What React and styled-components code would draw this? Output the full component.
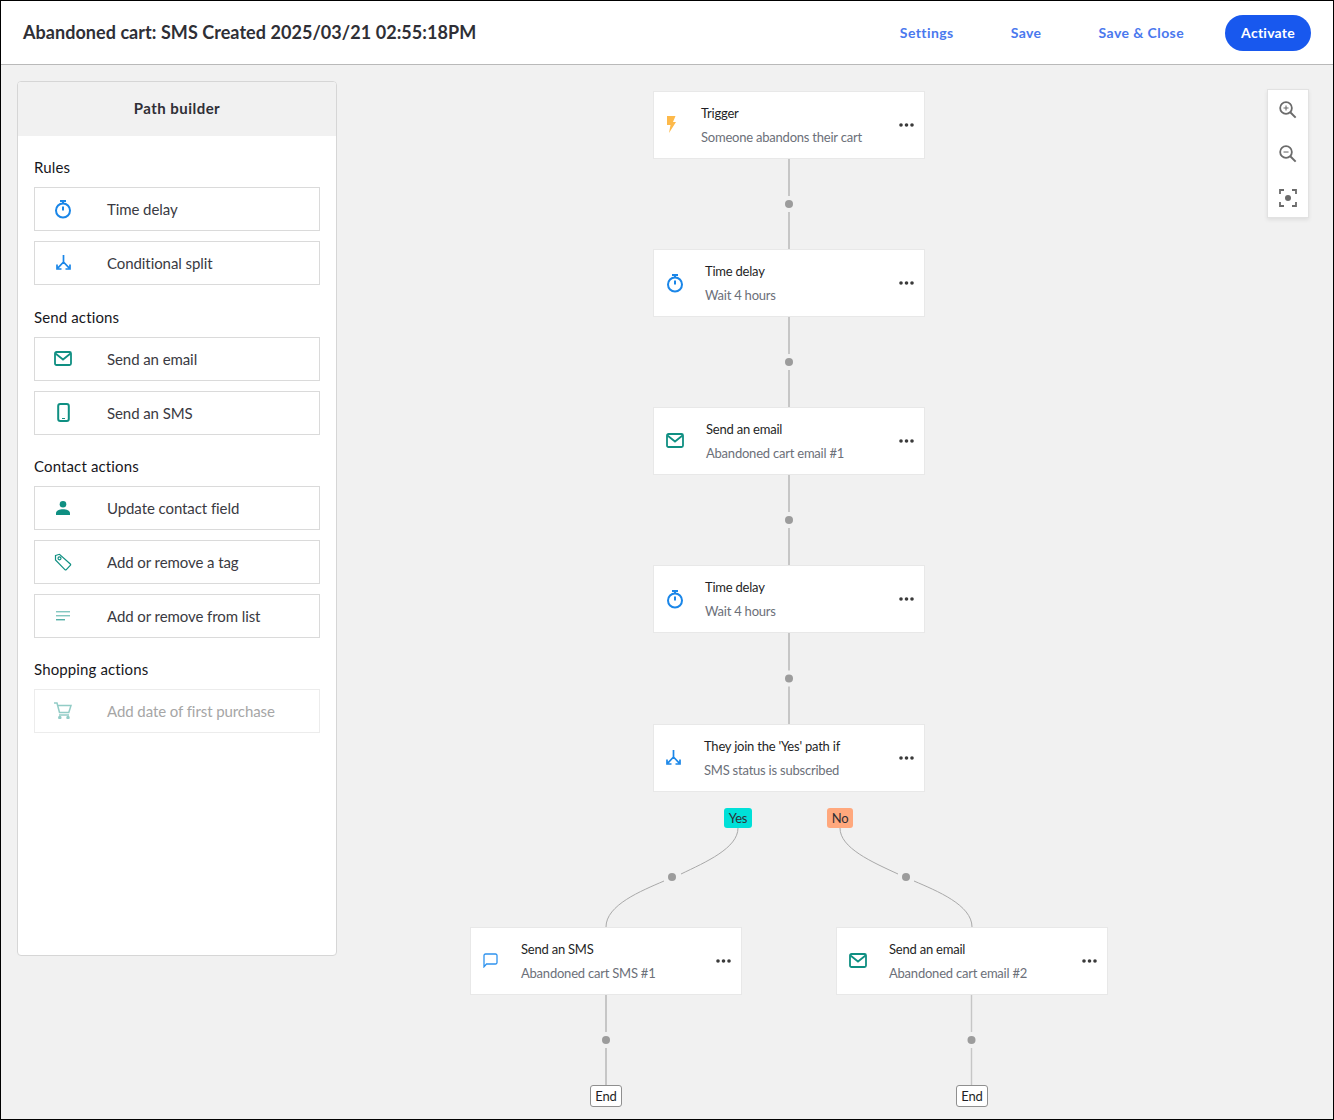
import React from "react";
import styled, { createGlobalStyle } from "styled-components";

const Global = createGlobalStyle`
  * { box-sizing: border-box; }
  html, body { margin: 0; padding: 0; }
  body { font-family: "Lato", "Noto Sans", sans-serif; background: #f1f1f1; }
`;

const Page = styled.div`
  width: 1334px; height: 1120px; border: 1px solid #000; background: #f1f1f1;
  display: flex; flex-direction: column; overflow: hidden;
`;
const Header = styled.header`
  height: 64px; flex: none; background: #fff; border-bottom: 1px solid #b9b9b9;
  display: flex; align-items: center; justify-content: space-between; padding: 0 22px;
`;
const Title = styled.h1`
  margin: 0 0 1px; font-size: 18px; font-weight: 700; color: #2f2f36; letter-spacing: .05px;
`;
const Actions = styled.nav`display: flex; align-items: center; gap: 25px;`;
const LinkButton = styled.button`
  border: 0; background: none; padding: 0 16px; font: 700 14px "Lato", sans-serif;
  color: #4a78ee; letter-spacing: .42px;
`;
const PrimaryButton = styled.button`
  border: 0; background: #1858ee; color: #fff; height: 36px; border-radius: 18px;
  padding: 0 16px; font: 700 14px "Lato", sans-serif; letter-spacing: .25px;
`;
const Body = styled.main`flex: 1; display: flex; position: relative; padding: 16px;`;
const Panel = styled.aside`
  width: 320px; height: 875px; background: #fff; border: 1px solid #d6d6d6; border-radius: 4px;
  overflow: hidden; flex: none;
`;
const PanelTitle = styled.div`
  height: 54px; padding-bottom: 2px; background: #f1f1f1; display: flex; align-items: center; justify-content: center;
  font-size: 15px; font-weight: 700; color: #2f2f36; letter-spacing: .45px;
`;
const PanelBody = styled.div`padding: 22px 16px; display: flex; flex-direction: column; gap: 22px;`;
const Section = styled.section`
  display: flex; flex-direction: column; gap: 10px;
  &:first-child { margin-bottom: 1px; }
`;
const SectionTitle = styled.h2`
  margin: 0 0 -1px; height: 20px; line-height: 18px; font-size: 15px; font-weight: 400; color: #17171c;
  letter-spacing: .13px;
`;
const Row = styled.div`
  height: 44px; border: 1px solid ${p => (p.$disabled ? "#ececec" : "#dadada")}; background: #fff;
  display: flex; align-items: center; padding: 0 0 1px 19px; letter-spacing: -.08px;
  font-size: 15px; color: ${p => (p.$disabled ? "#a6a6a6" : "#3a3a42")};
`;
const RowIcon = styled.span`
  width: 53px; height: 20px; display: flex; align-items: center; opacity: ${p => (p.$disabled ? 0.45 : 1)};
  svg { display: block; }
`;
const RowSlot = styled.span`width: 18px; display: flex; justify-content: center;`;

const Canvas = styled.div`position: absolute; inset: 0;`;
const Wires = styled.svg`position: absolute; left: 0; top: 0;`;
const Node = styled.article`
  position: absolute; left: ${p => p.$x}px; top: ${p => p.$y}px; width: 272px; height: 68px;
  background: #fff; border: 1px solid #e8e8e8; display: flex; align-items: center; padding: 0 0 1px 12px;
`;
const NodeIcon = styled.span`
  width: ${p => p.$w}px; flex: none; display: flex; align-items: center;
  svg { display: block; }
`;
const NodeText = styled.div`flex: 1; display: flex; flex-direction: column; gap: 8px;`;
const NodeTitle = styled.div`font-size: 13px; line-height: 16px; color: #1f1f26; letter-spacing: -.22px;`;
const NodeSub = styled.div`font-size: 13px; line-height: 16px; color: #6c7079; letter-spacing: -.22px;`;
const More = styled.svg`position: absolute; right: 10px; top: 31px;`;
const Badge = styled.div`
  position: absolute; left: ${p => p.$x}px; top: 743px; height: 20px; width: ${p => p.$w}px;
  background: ${p => p.$bg}; border-radius: 3px; color: #2f2f36; font-size: 13px;
  display: flex; align-items: center; justify-content: center; letter-spacing: -.2px;
`;
const EndTag = styled.div`
  position: absolute; left: ${p => p.$x}px; top: 1020px; width: ${p => p.$w}px; height: 22px;
  background: #fff; border: 1px solid #8f8f8f; border-radius: 3px; font-size: 13px; color: #1f1f26;
  display: flex; align-items: center; justify-content: center; letter-spacing: -.2px;
`;
const ZoomBar = styled.div`
  position: absolute; left: 1266px; top: 24px; width: 42px; height: 129px; display: flex;
  flex-direction: column; justify-content: center;
  background: #fff; border: 1px solid #e2e2e2; box-shadow: 0 2px 4px rgba(0,0,0,.08);
`;
const ZoomButton = styled.div`
  height: 44px; flex: none; display: flex; align-items: center; justify-content: center;
  svg { display: block; }
`;

const BLUE = "#1a86e8", TEAL = "#0f8f82";
const Timer = () => (
  <svg width="18" height="20" viewBox="0 0 18 20" fill="none" stroke={BLUE} strokeWidth="2">
    <circle cx="9" cy="11.500" r="7" /><path d="M6 2h6M9 2v2.500M9 11.500V7.500" />
  </svg>
);
const Split = () => (
  <svg width="15" height="15" viewBox="0 0 15 15" fill="none" stroke={BLUE} strokeWidth="1.700">
    <path d="M7.500 0v7L2 12.800M7.500 7L13 12.800M1 9.500v4.500h4.500M14 9.500v4.500h-4.500" />
  </svg>
);
const Mail = () => (
  <svg width="18" height="15" viewBox="0 0 18 15" fill="none" stroke={TEAL} strokeWidth="1.800">
    <rect x="1" y="1" width="16" height="13" rx="1.500" /><path d="M1.500 2.500L9 8.500l7.500-6" />
  </svg>
);
const Phone = () => (
  <svg width="13" height="19" viewBox="0 0 13 19" fill="none" stroke={TEAL} strokeWidth="2">
    <rect x="1.200" y="1" width="10.600" height="17" rx="2" /><path d="M5 15.500h3" strokeWidth="1" />
  </svg>
);
const Person = () => (
  <svg width="14" height="14" viewBox="0 0 14 14" fill={TEAL}>
    <circle cx="7" cy="3.300" r="3.300" /><path d="M0 14v-1.800C0 9.800 3.500 8.300 7 8.300s7 1.500 7 3.900V14z" />
  </svg>
);
const TagIcon = () => (
  <svg width="18" height="18" viewBox="0 0 18 18" fill="none" stroke={TEAL} strokeWidth="1.200">
    <path d="M1.500 2.500l4-1.200 10.800 9.700a1 1 0 0 1 0 1.400l-4 4.200a1 1 0 0 1-1.400 0L1.500 7z" /><circle cx="5.500" cy="5.300" r="1.500" />
  </svg>
);
const ListIcon = () => (
  <svg width="14" height="10" viewBox="0 0 14 10" fill="none" stroke={TEAL}>
    <path d="M0 .8h14" stroke="#4fb0a6" /><path d="M0 4.800h14" stroke="#4fb0a6" /><path d="M0 8.800h9" />
  </svg>
);
const Cart = () => (
  <svg width="18" height="17" viewBox="0 0 18 17" fill="none" stroke={TEAL} strokeWidth="1.500">
    <path d="M0 1h3l2.500 9.500h9.300L17 3.500H4" /><path d="M5 13h10" />
    <circle cx="5.800" cy="15.500" r="1" fill={TEAL} /><circle cx="14" cy="15.500" r="1" fill={TEAL} />
  </svg>
);
const Bolt = () => (
  <svg width="10" height="17" viewBox="0 0 10 17"><path d="M1 0h8.500L7 6h3L3 17l1.500-8H1z" fill="#fdb94a" /></svg>
);
const Chat = () => (
  <svg width="15" height="15" viewBox="0 0 15 15" fill="none" stroke="#2f93ee" strokeWidth="1.300">
    <path d="M1 13.800V2.500A1.500 1.500 0 0 1 2.500 1h10A1.500 1.500 0 0 1 14 2.500v7A1.500 1.500 0 0 1 12.500 11H3.500z" />
  </svg>
);
const ZoomGlass = ({ plus }) => (
  <svg width="18" height="18" viewBox="0 0 20 20" fill="none" stroke="#6b6b6b">
    <circle cx="7.800" cy="7.800" r="6.500" strokeWidth="2" />
    <path d="M12.500 12.500L18.500 18.500" strokeWidth="2.200" />
    <path d={plus ? "M5 7.800h5.600M7.800 5v5.600" : "M5 7.800h5.600"} strokeWidth="1.200" />
  </svg>
);
const Focus = () => (
  <svg width="18" height="18" viewBox="0 0 18 18" fill="none" stroke="#6b6b6b" strokeWidth="1.800">
    <path d="M1 5V1h4M13 1h4v4M17 13v4h-4M5 17H1v-4" /><circle cx="9" cy="9" r="3" fill="#6b6b6b" stroke="none" />
  </svg>
);
const Dots = () => (
  <More width="15" height="4" viewBox="0 0 15 4" fill="#3a3a3a">
    <circle cx="2" cy="2" r="1.800" /><circle cx="7.500" cy="2" r="1.800" /><circle cx="13" cy="2" r="1.800" />
  </More>
);

const sections = [
  ["Rules", [[<Timer />, "Time delay"], [<Split />, "Conditional split"]]],
  ["Send actions", [[<Mail />, "Send an email"], [<Phone />, "Send an SMS"]]],
  ["Contact actions", [[<Person />, "Update contact field"], [<TagIcon />, "Add or remove a tag"], [<ListIcon />, "Add or remove from list"]]],
  ["Shopping actions", [[<Cart />, "Add date of first purchase", true]]],
];

const nodes = [
  { x: 652, y: 26, w: 35, icon: <Bolt />, t: "Trigger", s: "Someone abandons their cart" },
  { x: 652, y: 184, w: 39, icon: <Timer />, t: "Time delay", s: "Wait 4 hours" },
  { x: 652, y: 342, w: 40, icon: <Mail />, t: "Send an email", s: "Abandoned cart email #1" },
  { x: 652, y: 500, w: 39, icon: <Timer />, t: "Time delay", s: "Wait 4 hours" },
  { x: 652, y: 659, w: 38, icon: <Split />, t: "They join the 'Yes' path if", s: "SMS status is subscribed" },
  { x: 469, y: 862, w: 38, icon: <Chat />, t: "Send an SMS", s: "Abandoned cart SMS #1" },
  { x: 835, y: 862, w: 40, icon: <Mail />, t: "Send an email", s: "Abandoned cart email #2" },
];

// wire coordinates are relative to the canvas, whose origin is (1, 65) in the page
const stem = (x, y1, y2, key, width = 2) => {
  const mid = (y1 + y2) / 2;
  return (
    <g key={key}>
      <path d={`M${x} ${y1}V${mid - 8}M${x} ${mid + 8}V${y2}`} stroke="#c6c6c6" strokeWidth={width} fill="none" />
      <circle cx={x} cy={mid} r="4" fill="#9c9c9c" />
    </g>
  );
};

export default function App() {
  return (
    <Page>
      <Global />
      <Header>
        <Title>Abandoned cart: SMS Created 2025/03/21 02:55:18PM</Title>
        <Actions>
          <LinkButton>Settings</LinkButton>
          <LinkButton>Save</LinkButton>
          <LinkButton>Save &amp; Close</LinkButton>
          <PrimaryButton>Activate</PrimaryButton>
        </Actions>
      </Header>
      <Body>
        <Panel>
          <PanelTitle>Path builder</PanelTitle>
          <PanelBody>
            {sections.map(([name, rows]) => (
              <Section key={name}>
                <SectionTitle>{name}</SectionTitle>
                {rows.map(([icon, label, disabled]) => (
                  <Row key={label} $disabled={disabled}>
                    <RowIcon $disabled={disabled}><RowSlot>{icon}</RowSlot></RowIcon>
                    {label}
                  </Row>
                ))}
              </Section>
            ))}
          </PanelBody>
        </Panel>
        <Canvas>
          <Wires width="1332" height="1054" viewBox="0 0 1332 1054">
            {[[94, 184], [252, 342], [410, 500], [568, 659]].map(([a, b]) => stem(788, a, b, a))}
            {stem(605, 930, 1020, "l")}
            {stem(970.5, 930, 1020, "r", 1.4)}
            <g fill="none" stroke="#a9a9a9" strokeWidth="1">
              <path d="M737 763C737 783 705 797 680 809" />
              <path d="M663 816C640 826 605 840 605 862" />
              <path d="M839 763C839 783 871 797 897 809" />
              <path d="M913 816C936 826 971 840 971 862" />
            </g>
            <circle cx="671" cy="812" r="4" fill="#9c9c9c" />
            <circle cx="905" cy="812" r="4" fill="#9c9c9c" />
          </Wires>
          {nodes.map(n => (
            <Node key={n.y + n.s} $x={n.x} $y={n.y}>
              <NodeIcon $w={n.w}>{n.icon}</NodeIcon>
              <NodeText>
                <NodeTitle>{n.t}</NodeTitle>
                <NodeSub>{n.s}</NodeSub>
              </NodeText>
              <Dots />
            </Node>
          ))}
          <Badge $x={723} $w={28} $bg="#00e0d8">Yes</Badge>
          <Badge $x={826} $w={26} $bg="#ffa87d">No</Badge>
          <EndTag $x={589} $w={32}>End</EndTag>
          <EndTag $x={955} $w={32}>End</EndTag>
          <ZoomBar>
            <ZoomButton><ZoomGlass plus /></ZoomButton>
            <ZoomButton><ZoomGlass /></ZoomButton>
            <ZoomButton><Focus /></ZoomButton>
          </ZoomBar>
        </Canvas>
      </Body>
    </Page>
  );
}
